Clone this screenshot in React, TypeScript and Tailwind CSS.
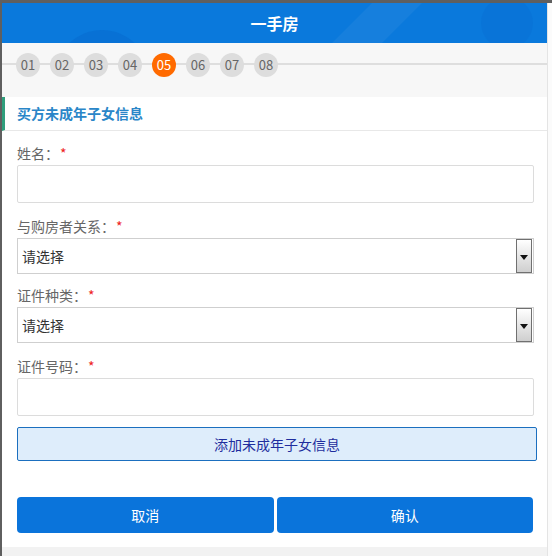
const font = { fontFamily: '"Noto Sans CJK SC", "Noto Sans", sans-serif' };

const steps = ['01', '02', '03', '04', '05', '06', '07', '08'];
const active = '05';

const Label = ({ text }: { text: string }) => (
	<div className="h-[22px] mb-px flex items-center text-[14px] text-[#666]">
		{text}：<span className="text-[#e22] ml-px">*</span>
	</div>
);

const TextInput = () => (
	<input type="text" className="block w-full h-[38px] border border-[#dcdcdc] rounded-[2px] bg-white px-1 outline-none" />
);

const FakeSelect = () => (
	<div className="flex items-stretch h-[36px] border border-[#cfcfcf] bg-white">
		<div className="flex-1 flex items-center pl-[4px] text-[14px] text-[#333]">请选择</div>
		<div className="w-[16px] mr-px border border-[#707070] bg-gradient-to-b from-white to-[#cfcfcf] flex items-center justify-center">
			<svg width="8" height="5" viewBox="0 0 8 5" className="mt-[2px]">
				<path d="M0 0H8L4 5Z" fill="#111" />
			</svg>
		</div>
	</div>
);

export default function App() {
	return (
		<div className="w-[552px] h-[556px] bg-[#fbfbfb] border-t-[3px] border-l-2 border-[#5f5f5f] overflow-hidden" style={font}>
			<div className="w-[546px] h-full bg-[#f2f2f2] border-r border-[#e4e4e4]">
				{/* header */}
				<div className="relative h-[40px] bg-[#0a79dc] overflow-hidden flex items-center justify-center">
					<svg className="absolute inset-0" width="546" height="40">
						<circle cx="100" cy="75" r="48" fill="#0668cc" opacity="0.45" />
						<polygon points="330,40 370,0 420,0 380,40" fill="#ffffff" opacity="0.05" />
						<circle cx="505" cy="20" r="26" fill="#0a6ed0" opacity="0.35" />
					</svg>
					<span className="relative text-white text-[16px] font-bold">一手房</span>
				</div>

				{/* steps */}
				<div className="relative h-[54px] bg-[#f7f7f7]">
					<div className="absolute left-0 right-0 top-[20px] h-[2px] bg-[#dedede]" />
					<div className="relative flex gap-[10px] pl-[14px] pt-[10px]">
						{steps.map((s) => (
							<div
								key={s}
								className={
									s === active
										? 'w-[24px] h-[24px] rounded-full bg-[#ff6a00] text-white text-[13px] flex items-center justify-center'
										: 'w-[24px] h-[24px] rounded-full bg-[#dddddd] text-[#666] text-[13px] flex items-center justify-center'
								}
							>
								{s}
							</div>
						))}
					</div>
				</div>

				{/* section title */}
				<div className="h-[34px] bg-white border-b border-[#e8e8e8] border-l-[3px] border-l-[#2f9e7c] flex items-center pl-[12px]">
					<span className="text-[14px] font-bold text-[#2a86c8]">买方未成年子女信息</span>
				</div>

				{/* form */}
				<div className="bg-white pl-[15px] pr-[13px] pt-[11px] pb-[14px]">
					<div>
						<Label text="姓名" />
						<TextInput />
					</div>
					<div className="mt-[12px]">
						<Label text="与购房者关系" />
						<FakeSelect />
					</div>
					<div className="mt-[10px]">
						<Label text="证件种类" />
						<FakeSelect />
					</div>
					<div className="mt-[12px]">
						<Label text="证件号码" />
						<TextInput />
					</div>
					<button className="mt-[11px] w-[520px] h-[34px] border border-[#1b6fbf] bg-[#deedfb] rounded-[2px] text-[14px] text-[#1f2d9e]">
						添加未成年子女信息
					</button>
					<div className="mt-[36px] flex gap-[3px] pr-px">
						<button className="flex-1 h-[36px] rounded-[4px] bg-[#0a74db] text-white text-[14px]">取消</button>
						<button className="flex-1 h-[36px] rounded-[4px] bg-[#0a74db] text-white text-[14px]">确认</button>
					</div>
				</div>
			</div>
		</div>
	);
}
